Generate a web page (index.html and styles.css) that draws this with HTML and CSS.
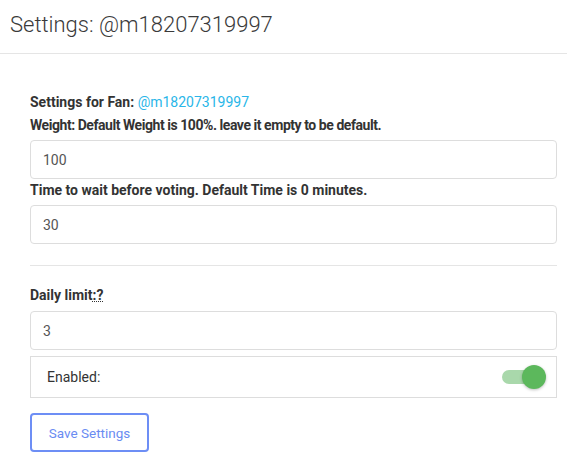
FILE: index.html
```html
<!DOCTYPE html>
<html>
<head>
<meta charset="utf-8">
<link rel="stylesheet" href="styles.css">
</head>
<body>
<header class="page-header">
  <h1 class="title">Settings: @m18207319997</h1>
</header>
<main class="content">
  <form class="settings-form">
    <p class="label label-fan">Settings for Fan: <a class="fan-link" href="#">@m18207319997</a></p>
    <label class="label label-weight" for="weight">Weight: Default Weight is 100%. leave it empty to be default.</label>
    <input class="field" id="weight" type="text" value="100">
    <label class="label" for="wait">Time to wait before voting. Default Time is 0 minutes.</label>
    <input class="field" id="wait" type="text" value="30">
    <hr class="divider">
    <label class="label label-daily" for="limit">Daily limit<abbr class="hint" title="Max votes per day">:?</abbr></label>
    <input class="field" id="limit" type="text" value="3">
    <div class="toggle-row">
      <span class="toggle-label">Enabled:</span>
      <span class="switch"><span class="track"></span><span class="knob"></span></span>
    </div>
    <button class="save-btn" type="button">Save Settings</button>
  </form>
</main>
</body>
</html>
```
FILE: styles.css
```css
* { box-sizing: border-box; }
html, body { margin: 0; padding: 0; background: #fff; }
body { font-family: Roboto, "Noto Sans", sans-serif; color: #333; }

.page-header {
  height: 54px;
  border-bottom: 1px solid #e5e5e5;
  padding: 11px 10px 0;
}
.title {
  margin: 0;
  font-size: 22px;
  font-weight: 300;
  color: #3a3a3a;
  line-height: 28px;
}

.content { padding: 37px 10px 0 30px; }
.settings-form { display: flex; flex-direction: column; }

.label {
  display: block;
  margin: 0;
  font-size: 14px;
  font-weight: 700;
  color: #333;
  line-height: 23px;
}
.label-fan { line-height: 21px; margin-top: 1px; }
.label-weight { line-height: 24px; letter-spacing: -0.45px; }
.fan-link { color: #29b6e8; font-weight: 400; text-decoration: none; }

.field {
  display: block;
  width: 100%;
  height: 39px;
  margin: 3px 0 0;
  padding: 0 12px;
  border: 1px solid #ddd;
  border-radius: 4px;
  font-family: Roboto, sans-serif;
  font-size: 14px;
  color: #555;
  background: #fff;
  outline: none;
}

.divider {
  width: 100%;
  border: 0;
  border-top: 1px solid #e5e5e5;
  margin: 21px 0 16px;
}

.label-daily { line-height: 26px; }
.hint {
  text-decoration: underline dotted;
  text-decoration-thickness: 1px;
  cursor: help;
}

.toggle-row {
  display: flex;
  align-items: center;
  justify-content: space-between;
  height: 42px;
  margin-top: 6px;
  padding: 0 10px 0 16px;
  border: 1px solid #ddd;
  font-size: 14px;
  color: #333;
}
.switch { position: relative; width: 44px; height: 26px; }
.track {
  position: absolute;
  left: 0; top: 6px;
  width: 40px; height: 14px;
  border-radius: 7px;
  background: #a9d8ab;
}
.knob {
  position: absolute;
  left: 20px; top: 1px;
  width: 24px; height: 24px;
  border-radius: 50%;
  background: #5cb85c;
  box-shadow: 0 1px 3px rgba(0,0,0,0.25);
}

.save-btn {
  align-self: flex-start;
  margin-top: 15px;
  width: 119px;
  height: 39px;
  border: 2px solid #6d8ef5;
  border-radius: 4px;
  background: #fff;
  color: #6a8cf2;
  font-family: Roboto, sans-serif;
  font-size: 13.5px;
  cursor: pointer;
}
```
